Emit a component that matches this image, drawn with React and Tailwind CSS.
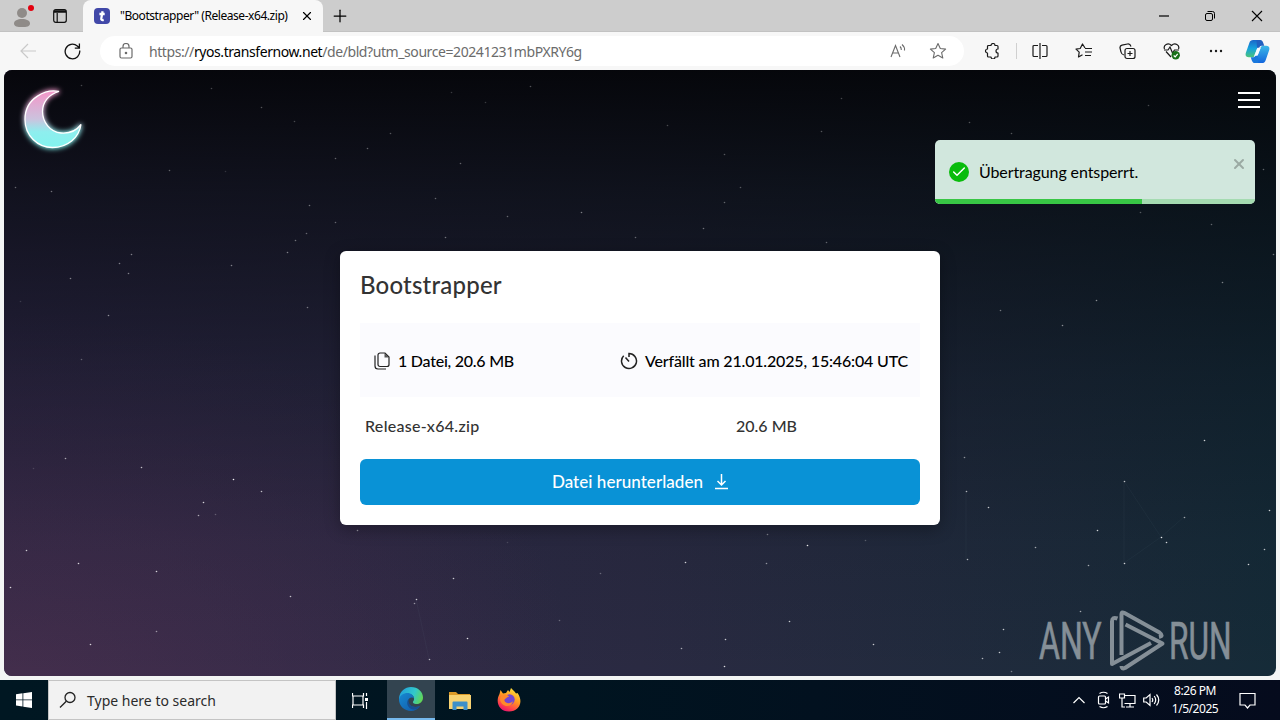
import { Check, Plus, X } from "lucide-react";

// [x, y, opacity]
const stars = [
  [81, 85, 0.25], [211, 88, 0.25], [261, 107, 0.3], [294, 121, 0.25], [451, 92, 0.2],
  [485, 102, 0.2], [530, 86, 0.3], [390, 133, 0.3], [367, 148, 0.35], [335, 158, 0.35],
  [460, 163, 0.35], [169, 170, 0.35], [225, 171, 0.15], [15, 187, 0.35], [51, 191, 0.4],
  [435, 198, 0.35], [309, 205, 0.4], [507, 216, 0.35], [581, 212, 0.45], [335, 222, 0.35],
  [306, 233, 0.35], [295, 240, 0.4], [287, 252, 0.45], [445, 237, 0.4], [635, 237, 0.35],
  [131, 254, 0.45], [119, 263, 0.45], [128, 273, 0.45], [70, 278, 0.45], [231, 265, 0.45],
  [307, 307, 0.4], [108, 315, 0.5], [81, 359, 0.3], [20, 301, 0.15], [33, 468, 0.15],
  [65, 458, 0.6], [141, 467, 0.7], [233, 479, 0.95], [261, 491, 0.7], [203, 502, 0.8],
  [198, 515, 0.6], [215, 514, 0.25], [26, 550, 0.75], [78, 563, 0.8], [156, 571, 0.8],
  [10, 587, 0.8], [290, 596, 0.7], [156, 631, 0.5], [90, 644, 0.8], [357, 530, 0.5],
  [453, 578, 0.75], [416, 599, 0.75], [414, 603, 0.5], [467, 638, 0.85], [429, 659, 0.65],
  [600, 573, 0.3], [559, 620, 0.3], [507, 542, 0.15],
  [841, 98, 0.25], [667, 125, 0.25], [821, 131, 0.3], [969, 122, 0.3], [1011, 133, 0.3],
  [1148, 105, 0.25], [724, 154, 0.3], [740, 187, 0.3], [724, 202, 0.35], [703, 228, 0.4],
  [826, 242, 0.35], [1263, 169, 0.35], [1140, 212, 0.3], [1211, 224, 0.35], [1273, 254, 0.4],
  [1222, 282, 0.45], [1096, 300, 0.5], [1000, 310, 0.4], [1062, 325, 0.5], [1204, 440, 0.8],
  [964, 457, 0.5], [966, 491, 0.65], [988, 507, 0.75], [1124, 481, 0.7], [1184, 517, 0.6],
  [1269, 510, 0.8], [1097, 530, 0.8], [1161, 537, 0.9], [1166, 542, 0.8], [1035, 547, 0.6],
  [1124, 563, 0.8], [1088, 565, 0.6], [1264, 549, 0.7], [1248, 564, 0.8], [967, 559, 0.65],
  [767, 534, 0.4], [807, 545, 0.9], [685, 562, 0.8], [766, 563, 0.5], [865, 540, 0.25],
  [1080, 611, 0.6], [789, 621, 0.75], [1003, 629, 0.75], [725, 639, 0.75], [681, 648, 0.6],
  [873, 644, 0.75], [999, 652, 0.75], [982, 658, 0.65], [724, 666, 0.85], [1011, 671, 0.4],
];

function TabStrip() {
  return (
    <div className="h-8 flex items-stretch bg-[#cdcdcd] border-b border-[#c2c2c2]">
      <div className="w-[83px] flex items-center">
        <svg className="ml-[11px] -mt-0.5" width="26" height="28" viewBox="0 0 26 28" fill="#8f8b88">
          <circle cx="11" cy="12" r="5" />
          <path d="M3 22.500c0-3 3.500-4.500 8-4.500s8 1.500 8 4.500-3.500 3.500-8 3.500-8-.5-8-3.500z" />
          <circle cx="20" cy="7" r="3" fill="#e3000f" />
        </svg>
        <svg className="ml-4" width="14" height="14" viewBox="0 0 14 14" fill="none" stroke="#111" strokeWidth="1.200">
          <rect x=".7" y=".7" width="12.600" height="12.600" rx="2" />
          <path d="M1 2.500h12" strokeWidth="2.500" />
          <path d="M4.200 4v9" />
        </svg>
      </div>
      <div className="w-[240px] -mb-px rounded-t-lg bg-[#f7f7f7] flex items-center">
        <svg className="ml-[11px] shrink-0" width="16" height="16" viewBox="0 0 16 16">
          <rect width="16" height="16" rx="4" fill="#4148a8" />
          <path d="M8.600 3.200L7.300 10.400q-.4 2.200 2.400 1.500M5.400 6h5.300" fill="none" stroke="#fff" strokeWidth="2.300" />
        </svg>
        <span className="ml-[10px] w-[178px] whitespace-nowrap text-[12px] tracking-[-0.45px] text-black">
          "Bootstrapper" (Release-x64.zip)
        </span>
        <X className="ml-0.5 shrink-0 text-black" size={14} strokeWidth={2} />
      </div>
      <Plus className="ml-[7px] mt-1.5 text-black" size={20} strokeWidth={1.500} />
      <div className="ml-auto flex items-center text-black">
        <svg className="mr-[35px]" width="10" height="2" viewBox="0 0 10 2" stroke="currentColor">
          <path d="M0 1h10" strokeWidth="1.200" />
        </svg>
        <svg className="mr-[35px]" width="12" height="12" viewBox="0 0 12 12" fill="none" stroke="currentColor">
          <rect x="1.500" y="3.500" width="7" height="7" rx="1.500" />
          <path d="M3.500 1.500h5a2 2 0 0 1 2 2v5" />
        </svg>
        <svg className="mr-[17px]" width="12" height="12" viewBox="0 0 12 12" stroke="currentColor" strokeWidth="1.100">
          <path d="M1 1l10 10M11 1L1 11" />
        </svg>
      </div>
    </div>
  );
}

function Toolbar() {
  return (
    <div className="h-[38px] flex items-center bg-[#f7f7f7] text-[#1a1a1a]">
      <svg className="ml-5" width="16" height="16" viewBox="0 0 16 16" fill="none" stroke="#c9c9c9" strokeWidth="1.200">
        <path d="M16 8H1M8 1L1 8l7 7" />
      </svg>
      <svg className="ml-7" width="17" height="17" viewBox="0 0 17 17" fill="none" stroke="#111" strokeWidth="1.300">
        <path d="M15.700 7.500A7.300 7.300 0 1 1 13.300 3L15 4.600M15.400.5v4.600h-4.600" />
      </svg>
      <div className="ml-[19px] w-[864px] h-[30px] rounded-full bg-white flex items-center text-[#6b6b6b]">
        <svg className="ml-[19px] shrink-0" width="14" height="16" viewBox="0 0 14 16" fill="none" stroke="currentColor" strokeWidth="1.200">
          <rect x="1" y="5" width="12" height="10" rx="1.500" />
          <path d="M4 5V3.500a3 3 0 0 1 6 0V5" />
          <circle cx="7" cy="10" r=".7" fill="currentColor" />
        </svg>
        <span className="ml-4 w-[500px] whitespace-nowrap text-[14px] tracking-[-0.42px]">
          https://<span className="text-black">ryos.transfernow.net</span>/de/bld?utm_source=20241231mbPXRY6g
        </span>
        <svg className="ml-auto" width="17" height="16" viewBox="0 0 17 16" fill="none" stroke="currentColor" strokeWidth="1.100">
          <path d="M1 14L5.500 2.500 10 14M2.500 10h6M10 3.500q1.500 1.500 1.300 3.500M12 1.500q3 2.500 2.500 6" />
        </svg>
        <svg className="ml-[22px] mr-[17px]" width="18" height="18" viewBox="0 0 18 18" fill="none" stroke="currentColor" strokeWidth="1.100" strokeLinejoin="round">
          <path d="M9 1.500l2.300 5 5.300.6-4 3.600 1.200 5.300L9 13.300 4.200 16l1.200-5.300-4-3.600 5.300-.6z" />
        </svg>
      </div>
      <svg className="ml-5" width="16" height="16" viewBox="0 0 16 16" fill="none" stroke="currentColor" strokeWidth="1.200" strokeLinejoin="round">
        <path d="M4.500 2.500H7a2 2 0 0 1 4 0h2a1 1 0 0 1 1 1V6a2 2 0 0 0 0 4v3a1 1 0 0 1-1 1h-2a2 2 0 0 1-4 0H4.500a1 1 0 0 1-1-1v-3a2 2 0 0 1 0-4V3.500a1 1 0 0 1 1-1z" />
      </svg>
      <div className="ml-4 h-4 w-px bg-[#d0d0d0]" />
      <svg className="ml-[15px]" width="16" height="16" viewBox="0 0 16 16" fill="none" stroke="currentColor" strokeWidth="1.200">
        <path d="M8 0v16M6 2.500H2a1 1 0 0 0-1 1v9a1 1 0 0 0 1 1h4M10 2.500h4a1 1 0 0 1 1 1v9a1 1 0 0 1-1 1h-4" />
      </svg>
      <svg className="ml-[27px]" width="18" height="16" viewBox="0 0 18 16" fill="none" stroke="currentColor" strokeWidth="1.200" strokeLinejoin="round">
        <path d="M10 5L7.500 1 5.200 5.500l-4.200.6 3.200 3L3.500 14l4-2.200M10 5.500h7M10 9h7M10 12.500h6" />
      </svg>
      <svg className="ml-[26px]" width="17" height="17" viewBox="0 0 17 17" fill="none" stroke="currentColor" strokeWidth="1.200">
        <rect x="6" y="5.500" width="10" height="10" rx="2" />
        <path d="M11 8v5M8.500 10.500h5M5 12Q2.500 11.500 2 9L1 5Q.7 2.800 3 2.200L8.500 1Q11 .5 12 3.500" />
      </svg>
      <svg className="ml-[27px]" width="18" height="18" viewBox="0 0 18 18" fill="none" stroke="currentColor" strokeWidth="1.200">
        <path d="M1.500 7C0 3 5 0 8.500 3.500 12 0 17 3 15.500 7M3 9.500l5 5.500M1 8h4l2-3 2.500 6L11.500 8H16" />
        <circle cx="12.700" cy="13.300" r="4.200" fill="#187018" stroke="none" />
        <path d="M10.700 13.500l1.500 1.400 2.500-3" stroke="#fff" />
      </svg>
      <svg className="ml-7" width="14" height="4" viewBox="0 0 14 4" fill="currentColor">
        <circle cx="2" cy="2" r="1.200" />
        <circle cx="7" cy="2" r="1.200" />
        <circle cx="12" cy="2" r="1.200" />
      </svg>
      <svg className="ml-[22px]" width="25" height="23" viewBox="0 0 26 24" preserveAspectRatio="none">
        <defs>
          <linearGradient id="cpA" x1="0" y1="0" x2="0" y2="1">
            <stop offset="0" stopColor="#1a66c9" />
            <stop offset=".5" stopColor="#15a3dd" />
            <stop offset="1" stopColor="#4cc47a" />
          </linearGradient>
          <linearGradient id="cpB" x1="0" y1="0" x2="0" y2="1">
            <stop offset="0" stopColor="#3bb9e8" />
            <stop offset="1" stopColor="#1466dd" />
          </linearGradient>
        </defs>
        <path d="M18 1q-1.500-1-4-1H8.500Q5.500 0 4.500 3L1 13q-1.500 5 3 5h3.500q2 0 3-3L14 4.500Q15 1.500 18 1z" fill="url(#cpA)" />
        <path d="M8 23q1.500 1 4 1h5.500q3 0 4-3L25 11q1.500-5-3-5h-3.500q-2 0-3 3L12 19.500Q11 22.500 8 23z" fill="url(#cpB)" />
        <path d="M12 0h3q3 0 4 3l1 3h-3q-1.500 0-2.500 2.500l-2 0z" fill="#2060c0" />
        <path d="M14 24h-3q-3 0-4-3l-1-3h3q1.500 0 2.500-2.500h2z" fill="#1a78dd" />
        <path d="M13 8h3.500L13 16.500H9.500z" fill="#f7fbff" />
      </svg>
    </div>
  );
}

function NightSky() {
  return (
    <div className="absolute inset-0 bg-linear-to-r from-[#32294a] via-[#2a2a42] to-[#152b38]">
      <div className="absolute inset-0 bg-[radial-gradient(ellipse_45%_60%_at_0%_100%,#432e4c,transparent)]" />
      <div className="absolute inset-0 bg-[linear-gradient(to_bottom,rgba(3,4,7,0.93),rgba(5,9,14,0.72)_20%,rgba(6,12,20,0.38)_50%,rgba(6,12,20,0.1)_78%,transparent)]" />
      <svg className="absolute inset-0" width="1272" height="606" viewBox="4 70 1272 606" fill="#fff">
        <g stroke="#6f8aa0" strokeWidth=".7" opacity=".1">
          <path d="M1124 481v82l37-26zM1161 537l23-20M966 491v68M416 599l13 60" fill="none" />
        </g>
        {stars.map(([x, y, o]) => (
          <circle key={`${x}-${y}`} cx={x + 0.5} cy={y + 0.5} r=".8" opacity={o} />
        ))}
      </svg>
    </div>
  );
}

function Moon() {
  const crescent =
    "M60 91.500C48 89 26 97 26 119.500c0 16 12.500 28 27.500 28 15 0 26.500-9.500 28.500-23-6 8-14 9-20 8.500-11-1-18.500-11-18.500-21.500 0-9.500 6-17 16.500-20z";

  return (
    <svg className="absolute left-1.5 top-2" width="84" height="84" viewBox="11 78 84 84">
      <defs>
        <linearGradient id="moon" x1="0" y1="0" x2="0" y2="1">
          <stop offset=".05" stopColor="#f09aca" />
          <stop offset=".5" stopColor="#cbc3de" />
          <stop offset=".72" stopColor="#8eeeee" />
          <stop offset="1" stopColor="#82f3ee" />
        </linearGradient>
        <filter id="glow" x="-30%" y="-30%" width="160%" height="160%">
          <feGaussianBlur stdDeviation="2.500" />
        </filter>
      </defs>
      <path d={crescent} fill="url(#moon)" stroke="url(#moon)" strokeWidth="3" filter="url(#glow)" />
      <path d={crescent} fill="url(#moon)" stroke="#fff" strokeWidth="1.300" />
    </svg>
  );
}

function Toast() {
  return (
    <div className="absolute right-[21px] top-[70px] w-[320px] h-16 rounded-[5px] overflow-hidden bg-[#d1e7dd]">
      <div className="h-16 flex items-center">
        <span className="ml-3.5 size-5 rounded-full bg-[#09bc0c] flex items-center justify-center">
          <Check className="text-white" size={16} strokeWidth={2.200} />
        </span>
        <span className="ml-[10px] whitespace-nowrap text-[16px] tracking-[-0.1px] text-black">Übertragung entsperrt.</span>
        <X className="ml-auto mr-2 -mt-4 text-[#9baaa3]" size={16} strokeWidth={3} />
      </div>
      <div className="absolute inset-x-0 bottom-0 h-[5px] bg-[#a5dbb1]">
        <div className="h-full w-[207px] bg-[#38c645]" />
      </div>
    </div>
  );
}

function DownloadCard() {
  return (
    <div className="relative mt-[181px] mx-auto w-[600px] h-[274px] rounded-md bg-white px-5 shadow-[0_4px_16px_rgba(0,0,0,0.3)]">
      <h1 className="pt-[19px] h-[72px] text-[24px] leading-[30px] tracking-[0.2px] font-medium text-[#333]">Bootstrapper</h1>
      <div className="h-[74px] bg-[#fbfbfe] flex items-center pt-0.5 text-[16px] font-medium text-black">
        <svg className="ml-3.5" width="16" height="18" viewBox="0 0 16 18" fill="none" stroke="#222" strokeWidth="1.200">
          <path d="M6 1h5l4 4v7.500a2 2 0 0 1-2 2H6a2 2 0 0 1-2-2V3a2 2 0 0 1 2-2zM1 3.500V14a3 3 0 0 0 3 3h8" />
          <path d="M10.500 1v4.500H15z" fill="#555" stroke="none" />
        </svg>
        <span className="ml-2 whitespace-nowrap tracking-[-0.25px]">1 Datei, 20.6 MB</span>
        <svg className="ml-auto" width="18" height="18" viewBox="0 0 18 18" fill="none" stroke="#222" strokeWidth="1.500">
          <path d="M9 5V1.500A7.500 7.500 0 1 1 3.700 3.700M5.500 5.500L9 9.500" />
        </svg>
        <span className="ml-[7px] mr-3 whitespace-nowrap tracking-[-0.17px]">Verfällt am 21.01.2025, 15:46:04 UTC</span>
      </div>
      <div className="h-[62px] flex items-center pb-1 pl-[5px] text-[16px] font-medium text-[#333]">
        <span className="w-[371px] tracking-[0.3px]">Release-x64.zip</span>
        <span>20.6 MB</span>
      </div>
      <button className="w-full h-[46px] rounded-md bg-[#0992d6] flex items-center justify-center text-[17px] tracking-[0.05px] font-medium text-white">
        Datei herunterladen
        <svg className="ml-3" width="13" height="16" viewBox="0 0 13 16" fill="none" stroke="#fff" strokeWidth="1.500">
          <path d="M6.500 0v11M2.500 7l4 4 4-4M0 14.500h13" />
        </svg>
      </button>
    </div>
  );
}

function Watermark() {
  return (
    <svg className="absolute right-[43px] bottom-[3px]" width="196" height="64" viewBox="1037 609 196 64" fill="#858f97">
      <g transform="translate(1039 659) scale(.62 1)" stroke="#858f97" strokeWidth=".7">
        <text x="0" y="0" fontSize="52" fontFamily="Roboto, sans-serif" textLength="101" lengthAdjust="spacingAndGlyphs">ANY</text>
      </g>
      <g transform="translate(1169 659) scale(.62 1)" stroke="#858f97" strokeWidth=".7">
        <text x="0" y="0" fontSize="52" fontFamily="Roboto, sans-serif" textLength="101" lengthAdjust="spacingAndGlyphs">RUN</text>
      </g>
      <g fill="none" stroke="#858f97" strokeWidth="4" strokeLinejoin="round">
        <path d="M1117.500 618.500q-5.500-2-5.500 3v42.500l39-21" />
        <path d="M1121.500 655v-41q0-2.500 3-1l35 19.500q4.500 3.500-.5 4.500" />
        <path d="M1125.500 624.500l37 19-37.500 24.500q-3.500 1.500-3.500-2" />
      </g>
    </svg>
  );
}

function Taskbar() {
  return (
    <div className="h-10 flex items-center bg-linear-to-r from-[#001722] via-[#001420] via-45% to-[#050b1d] text-white">
      <svg className="ml-4" width="16" height="16" viewBox="0 0 16 16" fill="#fff">
        <path d="M0 2.200l6.500-.9v6.200H0zM7.300 1.200L16 0v7.500H7.300zM0 8.300h6.500v6.200L0 13.600zM7.300 8.300H16V16l-8.700-1.200z" />
      </svg>
      <div className="ml-4 w-[288px] h-10 border border-[#c4c4c4] bg-[#f2f2f2] flex items-center">
        <svg className="ml-[10px]" width="18" height="18" viewBox="0 0 18 18" fill="none" stroke="#222" strokeWidth="1.300">
          <circle cx="11" cy="6.500" r="5" />
          <path d="M7.300 10.200L1 16.500" />
        </svg>
        <span className="ml-[10px] mt-px whitespace-nowrap text-[14px] text-[#2b2b2b]">Type here to search</span>
      </div>
      <svg className="ml-4" width="17" height="17" viewBox="0 0 17 17" fill="none" stroke="#fff" strokeWidth="1.200">
        <path d="M.5 1v3h11V1M.5 16v-3h11v3M1 4v9M11 4v9M14.500 1v3M14.500 10v7" />
        <path d="M13 6h3v3h-3z" fill="#fff" stroke="none" />
      </svg>
      <div className="ml-[18px] w-12 h-10 bg-[#334450] border-b-2 border-[#76b9ed] flex items-center justify-center">
        <svg width="24" height="24" viewBox="0 0 24 24">
          <defs>
            <linearGradient id="edTop" x1="0" y1=".3" x2="1" y2=".6">
              <stop offset="0" stopColor="#219fdc" />
              <stop offset=".6" stopColor="#32c9ca" />
              <stop offset="1" stopColor="#62d654" />
            </linearGradient>
            <linearGradient id="edBot" x1="0" y1="0" x2="1" y2="1">
              <stop offset="0" stopColor="#1689d2" />
              <stop offset="1" stopColor="#1257a5" />
            </linearGradient>
          </defs>
          <path d="M0 11C1 4 6 0 12 0c7 0 12 5 12 10.500 0 4-3 6.500-6 6.500-3.500 0-5-1.500-3.500-3 2-3.500-1-7-5-7-5 0-9 3-9.500 8z" fill="url(#edTop)" />
          <path d="M0 12.500C.5 8.500 4.500 6 8.500 6 12 6 15 8.500 15 11.500c-2-2-6-.5-6 3 0 4 5 7 12 4.500C19 22.500 15.500 24 12 24 5.500 24 0 19 0 12.500z" fill="url(#edBot)" />
          <path d="M9.500 12c-3 4-.5 10 5 10.500 3 0 5.500-1.500 6.500-3.500-7 2.500-12-.5-11.500-7z" fill="#174f92" />
        </svg>
      </div>
      <svg className="ml-[14px]" width="22" height="19" viewBox="0 0 22 19">
        <path d="M0 1h7l2 2h12v4H0z" fill="#dc9a28" />
        <path d="M0 4h22v14H0z" fill="#f8d272" />
        <path d="M3.500 19v-7.500q0-1 1-1h13q1 0 1 1V19h-4v-3.500h-7V19z" fill="#3e8fc9" />
      </svg>
      <svg className="ml-[26px]" width="24" height="24" viewBox="0 0 24 24">
        <defs>
          <linearGradient id="fox" x1=".8" y1="0" x2=".3" y2="1">
            <stop offset="0" stopColor="#ffe83d" />
            <stop offset=".45" stopColor="#ff9a22" />
            <stop offset=".8" stopColor="#ff3f4c" />
            <stop offset="1" stopColor="#e5126f" />
          </linearGradient>
        </defs>
        <path d="M2.500 6L3.500 2l2.500 3.500 3-.5 2-3 1.500 2L14 0l3.500 3.500 1.500 2 1.500-.5C27 14 22 23.500 12 23.500 2 23.500-2 14 2.500 6z" fill="url(#fox)" />
        <circle cx="12.500" cy="11.500" r="5.200" fill="#7447d1" />
        <path d="M4 8c4-3 7-1 8 1-3 0-3 2-5 3 1 4 7 4 9 1-1 7-12 7-13-2z" fill="#ff8a2b" />
      </svg>
      <div className="ml-auto flex items-center">
        <svg width="12" height="8" viewBox="0 0 12 8" fill="none" stroke="#fff" strokeWidth="1.200">
          <path d="M.5 7L6 1.500 11.500 7" />
        </svg>
        <svg className="ml-3" width="13" height="18" viewBox="0 0 13 18" fill="none" stroke="#fff" strokeWidth="1.200">
          <rect x="1.500" y="5" width="7" height="8" rx="1" />
          <path d="M8.500 8l3-2v6l-3-2M2.500 2.500Q6.500 0 10.500 2.500M2.500 15.500q4 2.500 8 0" />
        </svg>
        <svg className="ml-[9px]" width="17" height="15" viewBox="0 0 17 15" fill="none" stroke="#fff" strokeWidth="1.200">
          <path d="M6 2.500h10v8H5.500M11 10.500V14M7 14h8M.5 1h5v4h-5zM3 5v9h3" />
        </svg>
        <svg className="ml-[7px]" width="17" height="14" viewBox="0 0 17 14" fill="none" stroke="#fff" strokeWidth="1.200">
          <path d="M.7 5h2.500L7 1.500v11L3.200 9H.7zM9 5q1.500 2 0 4M11.200 3q3 4 0 8M13.500 1.500q4.500 5.500 0 11" />
        </svg>
        <div className="ml-2 w-[54px] text-center text-[12px] leading-[18px] tracking-[-0.45px] whitespace-nowrap">
          <div>8:26 PM</div>
          <div>1/5/2025</div>
        </div>
        <svg className="ml-[17px] mr-[24px]" width="17" height="17" viewBox="0 0 17 17" fill="none" stroke="#fff" strokeWidth="1.200">
          <path d="M1 1.500h15v11.500h-5l-2.500 3-2.500-3H1z" />
        </svg>
      </div>
    </div>
  );
}

export default function App() {
  return (
    <div className="w-[1280px] h-[720px] flex flex-col overflow-hidden bg-[#f3f5f4] font-['Noto_Sans',sans-serif]">
      <TabStrip />
      <Toolbar />
      <main className="relative mx-1 mb-1 h-[606px] rounded-lg overflow-hidden font-[Lato,sans-serif]">
        <NightSky />
        <Moon />
        <div className="absolute right-4 top-[22px] w-[22px] flex flex-col gap-[5px]">
          <div className="h-0.5 bg-white" />
          <div className="h-0.5 bg-white" />
          <div className="h-0.5 bg-white" />
        </div>
        <Toast />
        <DownloadCard />
        <Watermark />
      </main>
      <Taskbar />
    </div>
  );
}
